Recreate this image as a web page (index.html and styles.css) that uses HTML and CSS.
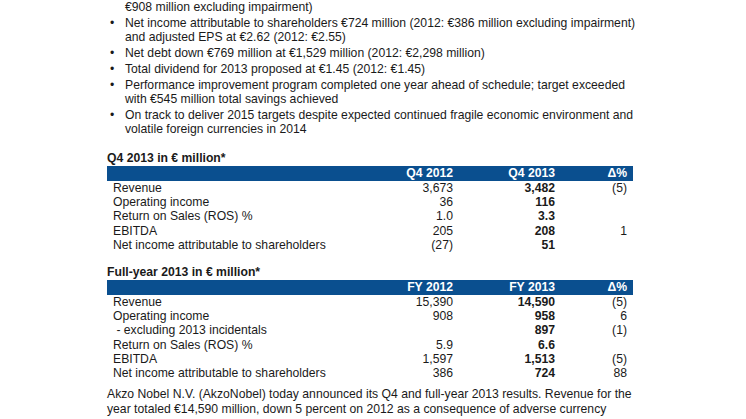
FILE: index.html
```html
<!DOCTYPE html>
<html>
<head>
<meta charset="utf-8">
<link rel="stylesheet" href="styles.css">
</head>
<body>
<div class="page">
  <ul class="highlights">
    <li><span class="dot">•</span><span class="txt">Operating income of €958 million, up 6 percent on previous year (2012:<br>€908 million excluding impairment)</span></li>
    <li><span class="dot">•</span><span class="txt">Net income attributable to shareholders €724 million (2012: €386 million excluding impairment) and adjusted EPS at €2.62 (2012: €2.55)</span></li>
    <li><span class="dot">•</span><span class="txt">Net debt down €769 million at €1,529 million (2012: €2,298 million)</span></li>
    <li><span class="dot">•</span><span class="txt">Total dividend for 2013 proposed at €1.45 (2012: €1.45)</span></li>
    <li><span class="dot">•</span><span class="txt">Performance improvement program completed one year ahead of schedule; target exceeded with €545 million total savings achieved</span></li>
    <li><span class="dot">•</span><span class="txt">On track to deliver 2015 targets despite expected continued fragile economic environment and volatile foreign currencies in 2014</span></li>
  </ul>

  <h2 class="tbl-title first">Q4 2013 in € million*</h2>
  <table class="fin">
    <colgroup><col class="c-label"><col class="c-prev"><col class="c-cur"><col class="c-delta"></colgroup>
    <thead>
      <tr><th></th><th>Q4 2012</th><th>Q4 2013</th><th class="delta">Δ%</th></tr>
    </thead>
    <tbody>
      <tr><td>Revenue</td><td>3,673</td><td class="b">3,482</td><td class="delta">(5)</td></tr>
      <tr><td>Operating income</td><td>36</td><td class="b">116</td><td class="delta"></td></tr>
      <tr><td>Return on Sales (ROS) %</td><td>1.0</td><td class="b">3.3</td><td class="delta"></td></tr>
      <tr><td>EBITDA</td><td>205</td><td class="b">208</td><td class="delta">1</td></tr>
      <tr><td>Net income attributable to shareholders</td><td>(27)</td><td class="b">51</td><td class="delta"></td></tr>
    </tbody>
  </table>

  <h2 class="tbl-title">Full-year 2013 in € million*</h2>
  <table class="fin">
    <colgroup><col class="c-label"><col class="c-prev"><col class="c-cur"><col class="c-delta"></colgroup>
    <thead>
      <tr><th></th><th>FY 2012</th><th>FY 2013</th><th class="delta">Δ%</th></tr>
    </thead>
    <tbody>
      <tr><td>Revenue</td><td>15,390</td><td class="b">14,590</td><td class="delta">(5)</td></tr>
      <tr><td>Operating income</td><td>908</td><td class="b">958</td><td class="delta">6</td></tr>
      <tr><td>&nbsp;- excluding 2013 incidentals</td><td></td><td class="b">897</td><td class="delta">(1)</td></tr>
      <tr><td>Return on Sales (ROS) %</td><td>5.9</td><td class="b">6.6</td><td class="delta"></td></tr>
      <tr><td>EBITDA</td><td>1,597</td><td class="b">1,513</td><td class="delta">(5)</td></tr>
      <tr><td>Net income attributable to shareholders</td><td>386</td><td class="b">724</td><td class="delta">88</td></tr>
    </tbody>
  </table>

  <p class="intro">Akzo Nobel N.V. (AkzoNobel) today announced its Q4 and full-year 2013 results. Revenue for the year totaled €14,590 million, down 5 percent on 2012 as a consequence of adverse currency developments and lower volumes in some markets.</p>
</div>
</body>
</html>
```

FILE: styles.css
```css
html, body {
  margin: 0;
  padding: 0;
  background: #ffffff;
}

body {
  font-family: "Liberation Sans", Arial, sans-serif;
  font-size: 12.2px;
  color: #1a1a1a;
  overflow: hidden;
}

.page {
  padding-left: 107px;
  width: 545px;
}

.highlights {
  list-style: none;
  margin: -14.4px 0 0 0;
  padding: 0;
  line-height: 14px;
}

.highlights li {
  display: flex;
}

.highlights li + li {
  margin-top: 2px;
}

.highlights .dot {
  flex: 0 0 18px;
  box-sizing: border-box;
  padding-left: 3px;
}

.highlights .txt {
  width: 518px;
}

.tbl-title {
  font-size: 12.2px;
  font-weight: bold;
  line-height: 14px;
  margin: 12.8px 0 1.2px 0;
}

.tbl-title.first {
  margin-top: 15.2px;
}

.fin {
  border-collapse: collapse;
  table-layout: fixed;
  width: 526px;
}

.c-label { width: 266px; }
.c-prev { width: 80px; }
.c-cur { width: 102px; }
.c-delta { width: 78px; }

.fin th {
  background: #0a4f8f;
  color: #ffffff;
  font-weight: bold;
  text-align: right;
  height: 15px;
  line-height: 14px;
  padding: 0;
}

.fin td {
  height: 14.2px;
  line-height: 14.2px;
  padding: 0;
  text-align: right;
  white-space: nowrap;
}

.fin td:first-child {
  text-align: left;
  padding-left: 6px;
}

.fin .delta {
  padding-right: 6px;
}

.fin td.b {
  font-weight: bold;
}

.intro {
  margin: 7.1px 0 0 0;
  line-height: 15px;
  width: 545px;
}
```
